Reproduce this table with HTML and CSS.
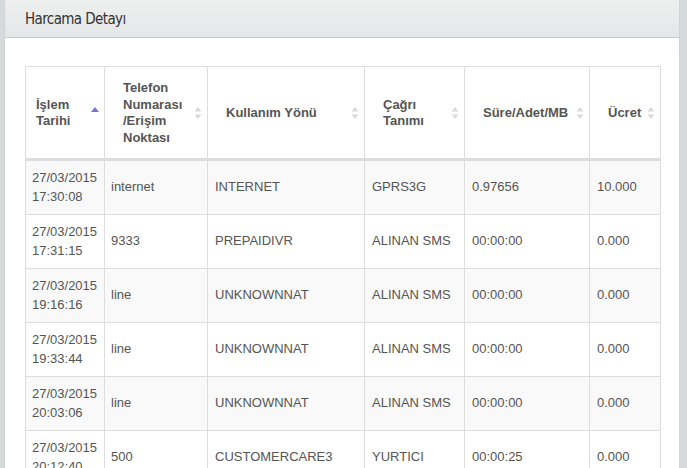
FILE: index.html
```
<!DOCTYPE html>
<html lang="tr">
<head>
<meta charset="utf-8">
<title>Harcama Detayı</title>
<link rel="stylesheet" href="styles.css">
</head>
<body>
<div class="panel">
  <div class="panel-heading"><h3 class="panel-title">Harcama Detayı</h3></div>
  <div class="panel-body">
    <table class="data-table">
      <colgroup>
        <col class="c1"><col class="c2"><col class="c3"><col class="c4"><col class="c5"><col class="c6">
      </colgroup>
      <thead>
        <tr>
          <th class="first">İşlem<br>Tarihi<span class="sort"><svg width="8" height="13" viewBox="0 0 8 13"><polygon points="0,5.5 4,0.5 8,5.5" fill="#7777d4"/></svg></span></th>
          <th>Telefon<br>Numarası<br>/Erişim<br>Noktası<span class="sort"><svg width="8" height="13" viewBox="0 0 8 13"><polygon points="0.5,5 4,0.5 7.5,5" fill="#dadada"/><polygon points="0.5,8 4,12.5 7.5,8" fill="#dadada"/></svg></span></th>
          <th>Kullanım Yönü<span class="sort"><svg width="8" height="13" viewBox="0 0 8 13"><polygon points="0.5,5 4,0.5 7.5,5" fill="#dadada"/><polygon points="0.5,8 4,12.5 7.5,8" fill="#dadada"/></svg></span></th>
          <th>Çağrı<br>Tanımı<span class="sort"><svg width="8" height="13" viewBox="0 0 8 13"><polygon points="0.5,5 4,0.5 7.5,5" fill="#dadada"/><polygon points="0.5,8 4,12.5 7.5,8" fill="#dadada"/></svg></span></th>
          <th>Süre/Adet/MB<span class="sort"><svg width="8" height="13" viewBox="0 0 8 13"><polygon points="0.5,5 4,0.5 7.5,5" fill="#dadada"/><polygon points="0.5,8 4,12.5 7.5,8" fill="#dadada"/></svg></span></th>
          <th>Ücret<span class="sort"><svg width="8" height="13" viewBox="0 0 8 13"><polygon points="0.5,5 4,0.5 7.5,5" fill="#dadada"/><polygon points="0.5,8 4,12.5 7.5,8" fill="#dadada"/></svg></span></th>
        </tr>
      </thead>
      <tbody>
        <tr><td>27/03/2015<br>17:30:08</td><td>internet</td><td>INTERNET</td><td>GPRS3G</td><td>0.97656</td><td>10.000</td></tr>
        <tr><td>27/03/2015<br>17:31:15</td><td>9333</td><td>PREPAIDIVR</td><td>ALINAN SMS</td><td>00:00:00</td><td>0.000</td></tr>
        <tr><td>27/03/2015<br>19:16:16</td><td>line</td><td>UNKNOWNNAT</td><td>ALINAN SMS</td><td>00:00:00</td><td>0.000</td></tr>
        <tr><td>27/03/2015<br>19:33:44</td><td>line</td><td>UNKNOWNNAT</td><td>ALINAN SMS</td><td>00:00:00</td><td>0.000</td></tr>
        <tr><td>27/03/2015<br>20:03:06</td><td>line</td><td>UNKNOWNNAT</td><td>ALINAN SMS</td><td>00:00:00</td><td>0.000</td></tr>
        <tr><td>27/03/2015<br>20:12:40</td><td>500</td><td>CUSTOMERCARE3</td><td>YURTICI</td><td>00:00:25</td><td>0.000</td></tr>
      </tbody>
    </table>
  </div>
</div>
</body>
</html>
```
FILE: styles.css
```
html, body {
  margin: 0;
  padding: 0;
  background: #d6dadb;
}
body {
  padding: 0 7px 0 4px;
  font-family: "Liberation Sans", Arial, sans-serif;
  font-size: 13px;
  color: #555;
}
.panel {
  background: #fff;
  border-left: 1px solid #cfd3d4;
  border-right: 1px solid #cfd3d4;
  min-height: 468px;
}
.panel-heading {
  height: 37px;
  background: linear-gradient(#eef0f0, #e4e7e7);
  border-bottom: 1px solid #c9cccc;
  display: flex;
  align-items: center;
  padding: 0 20px;
}
.panel-title {
  margin: 0;
  font-family: "DejaVu Sans Condensed", "Liberation Sans Narrow", sans-serif;
  font-weight: normal;
  font-size: 15px;
  letter-spacing: -0.6px;
  color: #333;
}
.panel-body {
  padding: 28px 20px 0 20px;
}
.data-table {
  border-collapse: collapse;
  table-layout: fixed;
  width: 635px;
  border: 1px solid #ddd;
}
.c1 { width: 79px; }
.c2 { width: 103px; }
.c3 { width: 157px; }
.c4 { width: 100px; }
.c5 { width: 125px; }
.c6 { width: 71px; }
.data-table th {
  position: relative;
  text-align: left;
  font-weight: bold;
  color: #555;
  line-height: 16.5px;
  padding: 13px 18px 12px 18px;
  vertical-align: middle;
  white-space: nowrap;
  border: 1px solid #ddd;
  border-bottom: 3px solid #ddd;
}
.data-table th.first {
  padding-left: 10px;
}
.sort {
  position: absolute;
  right: 5px;
  top: 50%;
  transform: translateY(-50%);
  display: flex;
}
.data-table td {
  padding: 8px 7px;
  line-height: 18.5px;
  vertical-align: middle;
  white-space: nowrap;
  border: 1px solid #ddd;
}
.data-table td:first-child,
.data-table td:nth-child(2) {
  padding-left: 6px;
}
.data-table tbody tr:nth-child(odd) td {
  background: #f9f9f9;
}
```
